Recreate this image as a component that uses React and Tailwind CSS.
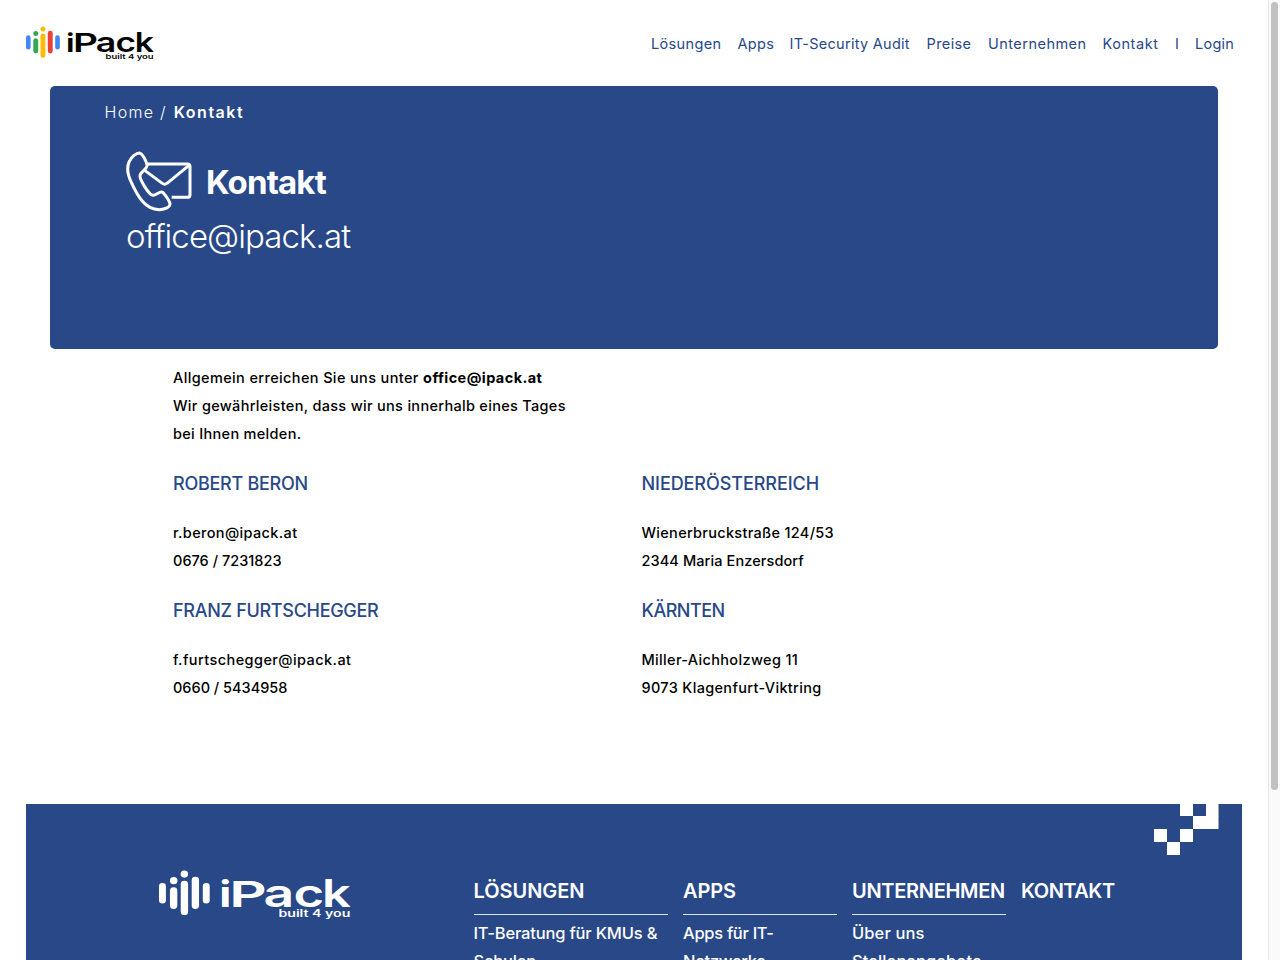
import React from 'react'

const navLinks = [
    { label: 'Lösungen', style: 'w-[70.5px] tracking-[0.35px]' },
    { label: 'Apps', style: 'w-[36px] tracking-[0.3px]' },
    { label: 'IT-Security Audit', style: 'w-[121px] tracking-[0.28px]' },
    { label: 'Preise', style: 'w-[45.5px] tracking-[0.4px]' },
    { label: 'Unternehmen', style: 'w-[98.5px] tracking-[0.47px]' },
    { label: 'Kontakt', style: 'w-[56.5px] tracking-[0.55px]' },
    { label: 'I', style: 'w-[4px]' },
    { label: 'Login', style: 'w-[40px] tracking-[0.25px]' },
]

const contacts = [
    {
        title: 'ROBERT BERON', style: 'tracking-[-0.28px]',
        lines: [
            { text: 'r.beron@ipack.at', style: 'tracking-[0.36px]' },
            { text: '0676 / 7231823', style: 'tracking-[0.02px]' },
        ]
    },
    {
        title: 'NIEDERÖSTERREICH', style: 'tracking-[-0.07px]',
        lines: [
            { text: 'Wienerbruckstraße 124/53', style: 'tracking-[0.3px]' },
            { text: '2344 Maria Enzersdorf', style: 'tracking-[0.1px]' },
        ]
    },
    {
        title: 'FRANZ FURTSCHEGGER', style: 'tracking-[-0.3px]',
        lines: [
            { text: 'f.furtschegger@ipack.at', style: 'tracking-[0.42px]' },
            { text: '0660 / 5434958', style: 'tracking-[0px]' },
        ]
    },
    {
        title: 'KÄRNTEN', style: 'tracking-[-0.5px]',
        lines: [
            { text: 'Miller-Aichholzweg 11', style: 'tracking-[0.34px]' },
            { text: '9073 Klagenfurt-Viktring', style: 'tracking-[0.33px]' },
        ]
    },
]

const footerColumns = [
    { title: 'LÖSUNGEN', style: 'tracking-[-0.05px]', linkStyle: 'tracking-[-0.18px]', width: 'w-[194px]', links: ['IT-Beratung für KMUs &', 'Schulen'] },
    { title: 'APPS', style: 'tracking-[-0.15px]', linkStyle: 'tracking-[-0.3px]', width: 'w-[153.5px]', links: ['Apps für IT-', 'Netzwerke'] },
    { title: 'UNTERNEHMEN', style: 'tracking-[-0.3px]', linkStyle: 'tracking-[0.1px]', width: 'w-[153.5px]', links: ['Über uns', 'Stellenangebote'] },
]

const Logo = ({ className, colors, textColor }) => {
    const [blue, green, yellow, red] = colors
    return <svg className={className} viewBox="0 0 128 36" preserveAspectRatio="none">
        <rect x="0" y="9.2" width="4.6" height="14.4" rx="2.3" fill={blue} />
        <circle cx="9.8" cy="7.5" r="2.5" fill={green} />
        <rect x="7.3" y="12.2" width="4.9" height="15.3" rx="2.4" fill={green} />
        <circle cx="16.9" cy="2.9" r="2.5" fill={yellow} />
        <rect x="14.5" y="7.6" width="4.9" height="24.2" rx="2.4" fill={yellow} />
        <rect x="21.8" y="4.8" width="4.9" height="22.7" rx="2.4" fill={red} />
        <rect x="29.2" y="9.2" width="4.6" height="14.4" rx="2.3" fill={blue} />
        <g fill={textColor} fontFamily="Inter, sans-serif" fontWeight="600">
            <text x="40.2" y="26" fontSize="25" fontWeight="700" textLength="8" lengthAdjust="spacingAndGlyphs">i</text>
            <text x="46.9" y="26" fontSize="25" textLength="25" lengthAdjust="spacingAndGlyphs">P</text>
            <text x="69.7" y="25.9" fontSize="27.5" textLength="20.5" lengthAdjust="spacingAndGlyphs">a</text>
            <text x="89.6" y="25.9" fontSize="27.5" textLength="20.5" lengthAdjust="spacingAndGlyphs">c</text>
            <text x="108.7" y="26" fontSize="27" textLength="19.2" lengthAdjust="spacingAndGlyphs">k</text>
            <text x="79.6" y="33" fontSize="6.8" textLength="48" lengthAdjust="spacingAndGlyphs">built 4 you</text>
        </g>
    </svg>
}

const ContactIcon = () => {
    return <svg className="w-[67px] h-[62px]" viewBox="258 213 201 186" fill="none" stroke="white" strokeWidth="9" strokeLinecap="round" strokeLinejoin="round">
        <path d="M298 219Q291 219 282 226C259 246 259 275 273 305C291 345 314 390 359 389C377 388 389 381 390 373C391 366 376 345 369 338C361 330 351 345 339 346C326 345 301 300 300 289C299 276 319 270 321 258C322 249 308 220 298 219Z" />
        <path d="M321 252H442Q450 252 450 260V344Q450 352 442 352H395" strokeLinecap="butt" />
        <path d="M314 271L367 310Q374 315 381 310L447 256" />
    </svg>
}

const PixelPattern = () => {
    return <svg className="absolute top-0 right-[23.5px] w-[64.5px] h-[51px]" viewBox="0 0 64.5 51" fill="white">
        <rect x="26" y="0" width="13" height="12" />
        <rect x="52" y="0" width="12.5" height="12.5" />
        <rect x="39" y="12" width="25.5" height="13" />
        <rect x="0" y="25" width="13" height="13" />
        <rect x="26" y="25" width="13" height="13" />
        <rect x="13" y="38" width="13" height="13" />
    </svg>
}

const App = () => {
    return <div className="flex h-[960px] w-[1280px] overflow-hidden bg-white font-['Inter',sans-serif] text-black">
        <div className="w-[1268px] shrink-0 flex flex-col">
            <header className="h-[86.4px] shrink-0 flex justify-between pl-[25.5px] pr-[33px]">
                <Logo className="mt-[25.5px] w-[128px] h-[36px]" colors={['#4285f4', '#34a853', '#fbbc05', '#ea4335']} textColor="#050505" />
                <nav className="mt-8 h-6 flex gap-4 text-[14.5px] leading-6 text-[#284888] whitespace-nowrap">
                    {navLinks.map((link) => {
                        return <a key={link.label} className={link.style}>{link.label}</a>
                    })}
                </nav>
            </header>

            <section className="ml-[49.5px] w-[1168.9px] h-[262.6px] shrink-0 rounded-[5px] bg-[#284888] text-white">
                <p className="ml-[55px] pt-[14px] text-[16px] leading-6 font-light tracking-[1.3px]">
                    Home / <span className="ml-px font-semibold tracking-[1.5px]">Kontakt</span>
                </p>
                <div className="ml-[76.5px] mt-[27px] flex">
                    <ContactIcon />
                    <h1 className="ml-[13px] mt-[6.5px] text-[33px] leading-[48px] font-bold tracking-[-0.85px]">Kontakt</h1>
                </div>
                <p className="ml-[76.5px] mt-[-0.5px] text-[33px] leading-[46px] font-light tracking-[-0.92px]">office@ipack.at</p>
            </section>

            <main className="ml-[173px] mt-[15px] h-[440px] shrink-0 text-[14.5px] leading-[28px] font-medium">
                <p className="tracking-[0.31px]">
                    <span className="tracking-[0.37px]">Allgemein erreichen Sie uns unter </span>
                    <strong className="font-bold tracking-[0.42px]">office@ipack.at</strong><br />
                    Wir gewährleisten, dass wir uns innerhalb eines Tages<br />
                    bei Ihnen melden.
                </p>
                <div className="mt-[22px] grid grid-cols-[468.5px_468.5px] gap-y-[21.5px]">
                    {contacts.map((contact) => {
                        return <div key={contact.title}>
                            <h2 className={'mb-[21.5px] text-[18px] leading-[28px] text-[#284888] ' + contact.style}>{contact.title}</h2>
                            {contact.lines.map((line) => {
                                return <p key={line.text} className={line.style}>{line.text}</p>
                            })}
                        </div>
                    })}
                </div>
            </main>

            <footer className="relative ml-[25.5px] w-[1216.9px] h-[156px] shrink-0 overflow-hidden bg-[#284888] text-white flex">
                <PixelPattern />
                <div className="w-[448px] shrink-0 pl-[133.5px] pt-[66px]">
                    <Logo className="w-[192px] h-[51px]" colors={['white', 'white', 'white', 'white']} textColor="white" />
                </div>
                <div className="flex gap-[15.5px] pt-[67px] whitespace-nowrap">
                    {footerColumns.map((col) => {
                        return <div key={col.title} className={col.width}>
                            <h3 className={'h-[44px] border-b border-[#dce6f5] text-[20px] leading-[40px] font-semibold ' + col.style}>{col.title}</h3>
                            <div className={'pt-[4px] text-[16.5px] leading-[28.5px] font-medium ' + col.linkStyle}>
                                {col.links.map((link) => {
                                    return <p key={link}>{link}</p>
                                })}
                            </div>
                        </div>
                    })}
                    <h3 className="text-[20px] leading-[40px] font-semibold tracking-[-0.5px]">KONTAKT</h3>
                </div>
            </footer>
        </div>

        <div className="w-3 shrink-0 border-l border-[#e8e8e8] bg-[#fafafa] flex justify-center">
            <div className="mt-[2px] w-[7px] h-[788px] rounded-full bg-[#c1c1c1]"></div>
        </div>
    </div>
}

export default App
